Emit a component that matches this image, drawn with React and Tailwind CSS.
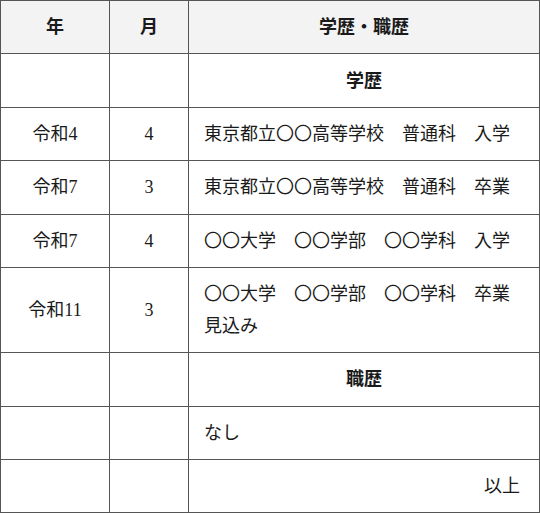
import React from "react";

const rows = [
  { y: "", m: "", t: "学歴", kind: "section" },
  { y: "令和4", m: "4", t: "東京都立〇〇高等学校　普通科　入学" },
  { y: "令和7", m: "3", t: "東京都立〇〇高等学校　普通科　卒業" },
  { y: "令和7", m: "4", t: "〇〇大学　〇〇学部　〇〇学科　入学" },
  { y: "令和11", m: "3", t: "〇〇大学　〇〇学部　〇〇学科　卒業見込み" },
  { y: "", m: "", t: "職歴", kind: "section" },
  { y: "", m: "", t: "なし" },
  { y: "", m: "", t: "以上", kind: "end" },
];

export default function App() {
  return (
    <div
      className="w-[540px] h-[514px] bg-white text-[#1a1a1a] text-[18px] leading-8"
      style={{ fontFamily: '"Liberation Serif", "Noto Sans CJK JP", serif' }}
    >
      <table className="w-[540px] table-fixed border-collapse border border-[#555]">
        <colgroup>
          <col className="w-[109px]" />
          <col className="w-[79px]" />
          <col />
        </colgroup>
        <thead>
          <tr className="bg-[#f3f3f3]">
            <th className="border border-[#555] py-[10.2px] text-center font-bold">年</th>
            <th className="border border-[#555] py-[10.2px] text-center font-bold">月</th>
            <th className="border border-[#555] py-[10.2px] text-center font-bold">学歴・職歴</th>
          </tr>
        </thead>
        <tbody>
          {rows.map((r, i) => (
            <tr key={i}>
              <td className="border border-[#555] py-[10.2px] text-center align-middle">{r.y}</td>
              <td className="border border-[#555] py-[10.2px] text-center align-middle">{r.m}</td>
              {r.kind === "section" ? (
                <td className="border border-[#555] py-[10.2px] text-center font-bold">{r.t}</td>
              ) : r.kind === "end" ? (
                <td className="border border-[#555] py-[10.2px] pr-[19px] text-right">{r.t}</td>
              ) : (
                <td className="border border-[#555] py-[10.2px] pl-[15px] pr-[16px] text-left">{r.t}</td>
              )}
            </tr>
          ))}
        </tbody>
      </table>
    </div>
  );
}
